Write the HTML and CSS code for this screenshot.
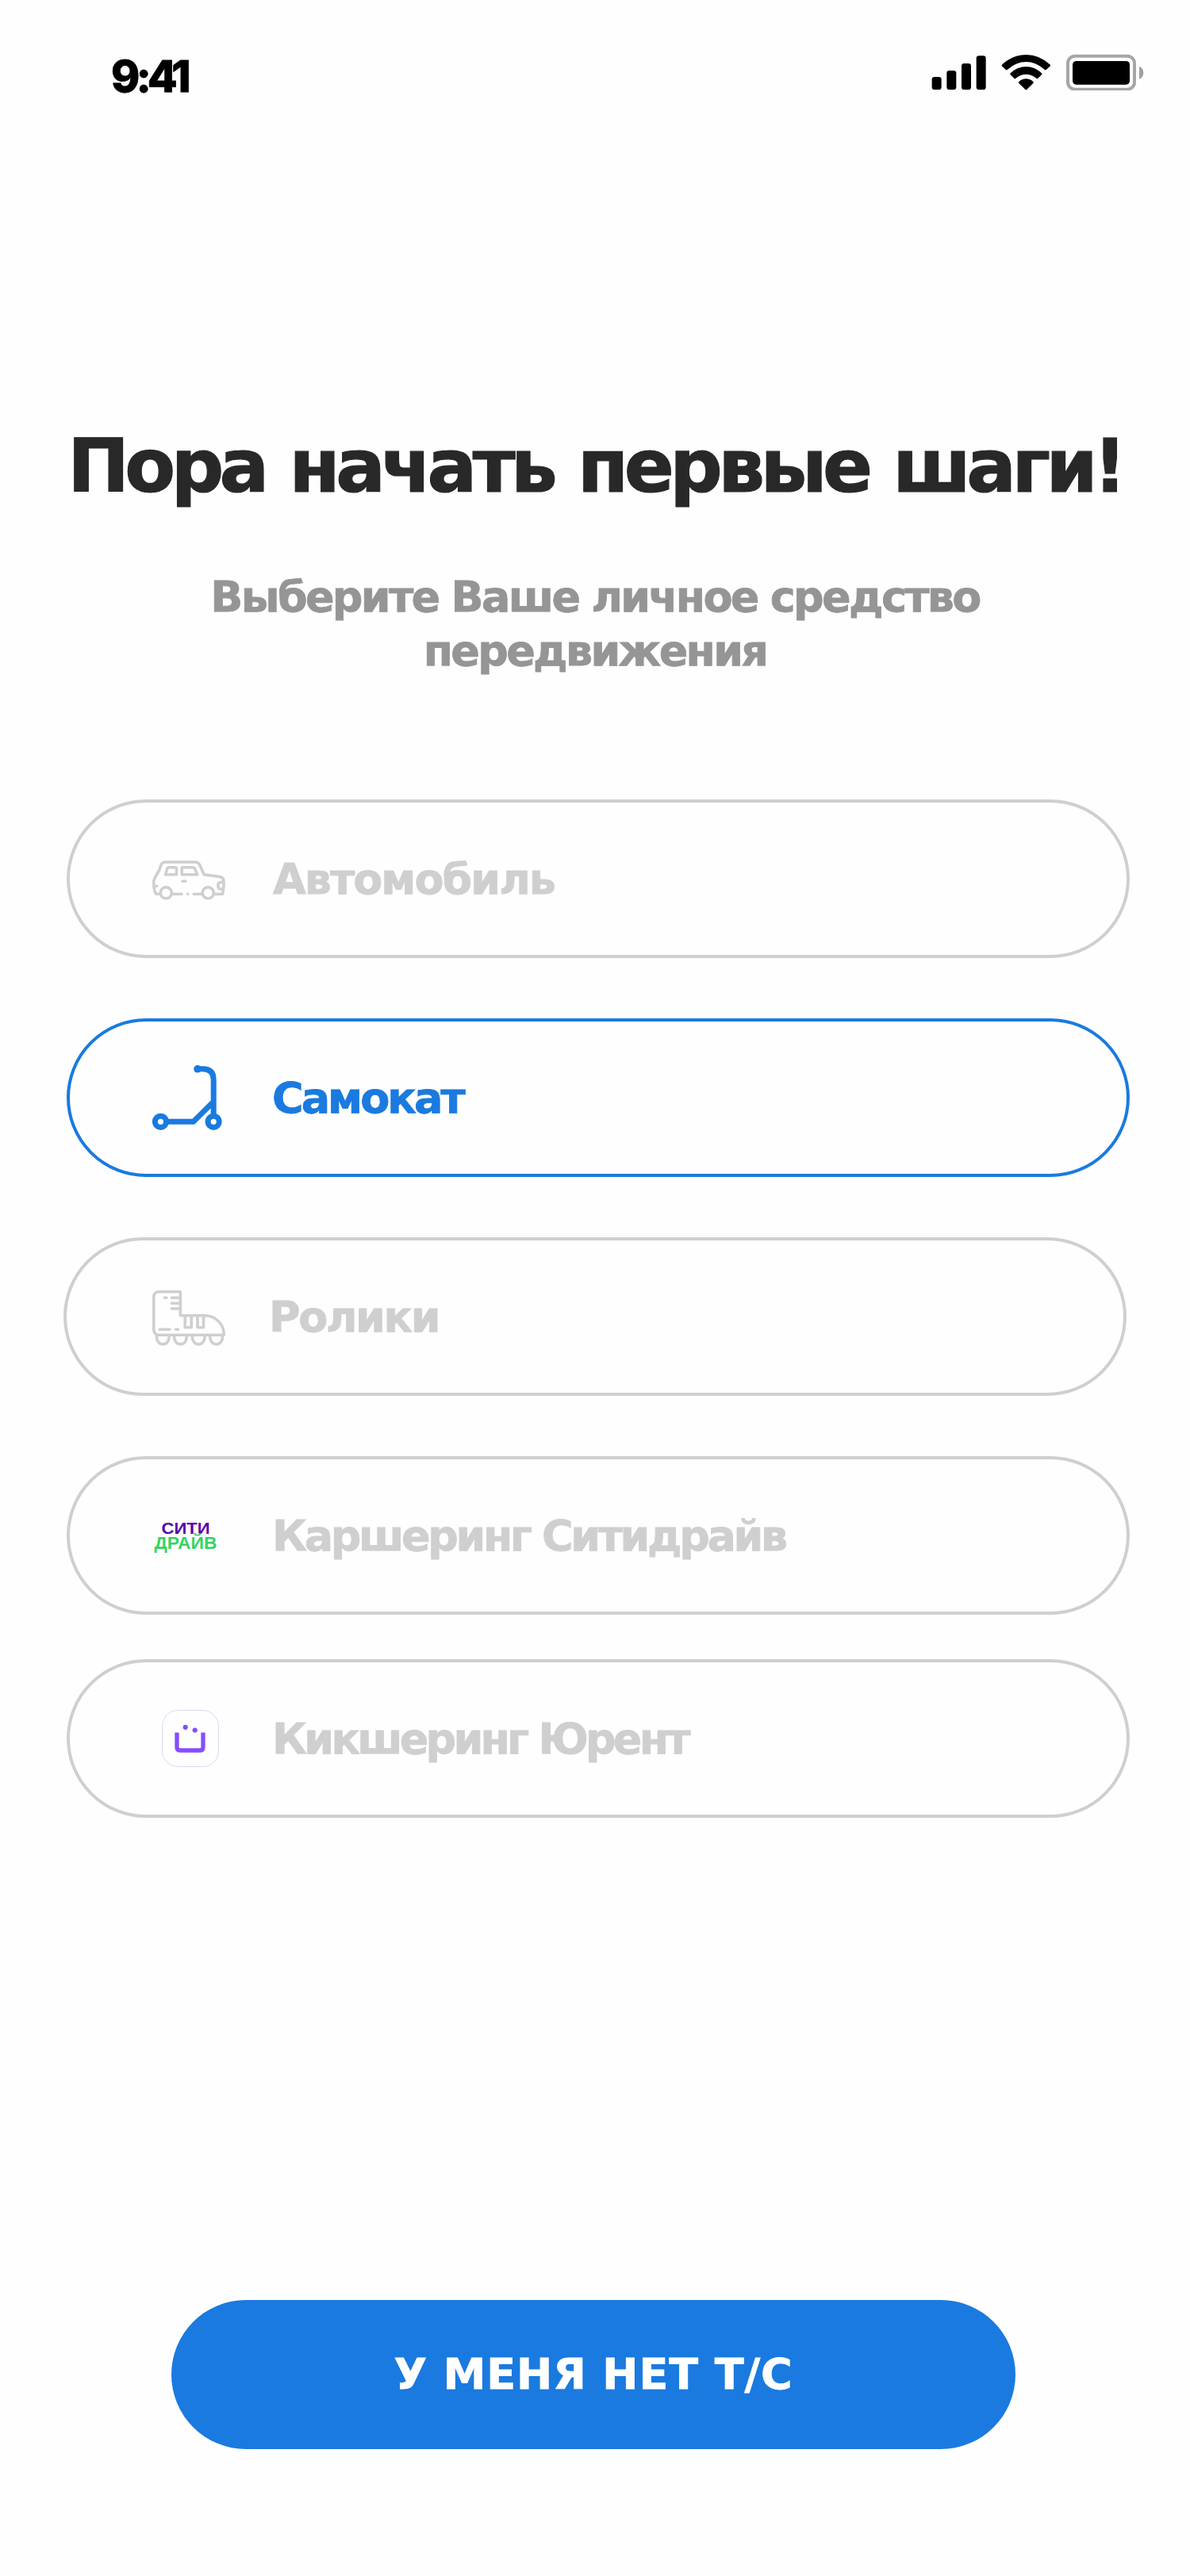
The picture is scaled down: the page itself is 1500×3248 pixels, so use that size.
FILE: index.html
```html
<!DOCTYPE html>
<html lang="ru">
<head>
<meta charset="utf-8">
<title>Выбор транспорта</title>
<link rel="stylesheet" href="styles.css">
</head>
<body>
<main class="screen">
  <header class="status">
    <span class="time">9:41</span>
    <svg class="indicators" width="270" height="50" viewBox="0 0 810 150">
      <rect x="8" y="99" width="36" height="48" rx="10"/>
      <rect x="64" y="75" width="36" height="72" rx="10"/>
      <rect x="120" y="48" width="36" height="99" rx="10"/>
      <rect x="176" y="19" width="36" height="128" rx="10"/>
      <path d="M274 52Q270 55 274 59L288 72Q291 74 294 71Q326 42 364 42Q402 42 434 71Q437 74 440 72L454 59Q458 55 454 52Q414 15 364 15Q314 15 274 52Z"/>
      <path d="M305 85Q302 88 305 91L319 104Q322 107 325 104Q344 89 364 89Q384 89 403 104Q406 107 409 104L423 91Q426 88 423 85Q397 60 364 60Q331 60 305 85Z"/>
      <path d="M337 117Q334 120 337 123L361 146Q364 149 367 146L391 123Q394 120 391 117Q379 106 364 106Q349 106 337 117Z"/>
      <rect x="522" y="20" width="252" height="126" rx="27" fill="none" stroke="#a6a6a6" stroke-width="12"/>
      <rect x="540" y="39" width="216" height="89" rx="14"/>
      <path d="M792 59Q808 67 808 83Q808 100 792 108Z" fill="#a0a0a0"/>
    </svg>
  </header>

  <h1 class="title">Пора начать первые шаги!</h1>
  <p class="subtitle">Выберите Ваше личное средство<br>передвижения</p>

  <section class="options">
    <button class="option">
      <span class="icon lowered">
        <svg width="92" height="50" viewBox="0 0 92 50" class="outline">
          <path d="M10 42.3H6Q4 42.3 3.3 39.5Q1.8 35 1.8 31V27Q1.8 25 2.6 23L9 11.5L11 5.5Q12.3 2 16 2H54.5Q58.5 2 60.5 7L65.2 17.8L84.5 20.4Q90 21.2 90 26.5V32L88.6 42.3H78.5"/>
          <path d="M26 42.3H37M44.6 42.1V42.3M52.2 42.3H62.3M38 26H41.8M2 32.3H5.7"/>
          <circle cx="17.3" cy="40.7" r="7.1"/><circle cx="70.3" cy="40.7" r="7.1"/>
          <path d="M20.8 8.7H29Q30.5 8.7 30.5 10.2V17.7H16.5L18.7 10.3Q19.2 8.7 20.8 8.7ZM38.6 8.7H51Q53 8.7 53.5 10.2L56.8 17.7H37.2V10.2Q37.2 8.7 38.6 8.7ZM90 27.3H87Q82.8 27.3 82.8 31.5Q82.8 36 87 36H89.4"/>
        </svg>
      </span>
      <span class="label car">Автомобиль</span>
    </button>
    <button class="option selected">
      <span class="icon">
        <svg width="88" height="82" viewBox="0 0 88 82" fill="none" stroke="currentColor" stroke-width="7">
          <circle cx="57" cy="4.8" r="4.8" fill="currentColor" stroke="none"/>
          <path d="M57 4.8H63.5Q77.2 4.8 77.2 18.5V63M20 71.3H51.8L77.2 46"/>
          <circle cx="10.5" cy="71.3" r="7.1"/><circle cx="77.2" cy="71.3" r="7.1"/>
        </svg>
      </span>
      <span class="label scooter">Самокат</span>
    </button>
    <button class="option shifted">
      <span class="icon lowered">
        <svg width="92" height="70" viewBox="0 0 92 70" class="outline">
          <path d="M35.4 1.8H8.5Q1.8 1.8 1.8 8.5V49Q1.8 54 6 56.3H90.2V55C90.2 42 79 31.7 66 31.7H35.4Z"/>
          <path d="M24.4 9.3H35M24.4 16.3H35M24.4 23H35M15.5 9.3H17.8M9.3 49.3H22M29.6 49.3H32.5M41.2 32V46.7H49.2V32M57 32V46.7H64.5V32"/>
          <path d="M5.5 57V59A7.8 9 0 0 0 21.2 59V57M27.6 57V59A7.8 9 0 0 0 43.3 59V57M50.4 57V59A7.8 9 0 0 0 66.1 59V57M72.8 57V59A7.8 9 0 0 0 88.5 59V57"/>
        </svg>
      </span>
      <span class="label skates">Ролики</span>
    </button>
    <button class="option">
      <span class="icon">
        <svg width="92" height="50" viewBox="0 0 92 50" class="citydrive">
          <text x="11.5" y="23.3" font-size="19.5" textLength="61" lengthAdjust="spacingAndGlyphs" fill="#5a00a8">СИТИ</text>
          <text x="2.5" y="42.3" font-size="21.5" textLength="79" lengthAdjust="spacingAndGlyphs" fill="#36d563">ДРАЙВ</text>
        </svg>
      </span>
      <span class="label carshare">Каршеринг Ситидрайв</span>
    </button>
    <button class="option near">
      <span class="icon">
        <svg class="urent" width="72" height="72" viewBox="0 0 72 72">
          <rect x=".5" y=".5" width="71" height="71" rx="20" fill="none" stroke="#ddd7f3"/>
          <path d="M19 28.5V47Q19 51 23 51H48Q52 51 52 47V28.5" fill="none" stroke="#844dff" stroke-width="5.3"/>
          <circle cx="29.7" cy="21.8" r="3.1" fill="#844dff"/><circle cx="41.7" cy="25.5" r="3.1" fill="#844dff"/>
        </svg>
      </span>
      <span class="label kickshare">Кикшеринг Юрент</span>
    </button>
  </section>

  <button class="action">У МЕНЯ НЕТ Т/С</button>
</main>
</body>
</html>
```
FILE: styles.css
```css
* { box-sizing: border-box; }
body { margin: 0; background: #fefefe; }
button { font: inherit; background: none; border: 0; padding: 0; }
.screen {
  width: 1500px;
  height: 3248px;
  display: flex;
  flex-direction: column;
  font-family: "DejaVu Sans", Inter, sans-serif;
  font-weight: 700;
  white-space: nowrap;
  -webkit-text-stroke: 0.8px currentColor;
}
.status {
  height: 530px;
  padding: 64px 58px 0 140px;
  display: flex;
  justify-content: space-between;
  align-items: flex-start;
}
.time {
  font-family: Inter, sans-serif;
  font-weight: 800;
  font-size: 55px;
  line-height: 64px;
  letter-spacing: -5px;
  color: #000;
}
.title {
  margin: 0 0 73px;
  text-align: center;
  font-size: 93px;
  line-height: 116px;
  letter-spacing: -5.6px;
  word-spacing: 4px;
  color: #282828;
  -webkit-text-stroke-width: 1.2px;
}
.subtitle {
  margin: 0;
  text-align: center;
  font-size: 54px;
  line-height: 68px;
  letter-spacing: -2.7px;
  color: #959595;
}
.options {
  margin-top: 153px;
  padding-left: 84px;
  display: flex;
  flex-direction: column;
  gap: 76px;
}
.option {
  width: 1340px;
  height: 200px;
  padding-left: 104px;
  display: flex;
  align-items: center;
  border: 4px solid #cfcfcf;
  border-radius: 100px;
  color: #cfcfcf;
}
.selected { border-color: #1a7adf; color: #1a7adf; }
.shifted { margin-left: -4px; padding-left: 108px; }
.near { margin-top: -20px; }
.icon { width: 151px; display: flex; align-items: center; }
.lowered { padding-top: 4px; }
.shifted .icon { width: 147px; }
.label { padding-top: 2px; font-size: 54px; line-height: 68px; letter-spacing: -2px; }
.car { padding-left: 1px; }
.scooter { letter-spacing: -3px; }
.skates { letter-spacing: -2.4px; }
.carshare { letter-spacing: -3.4px; }
.kickshare { letter-spacing: -3.8px; }
.outline { fill: none; stroke: currentColor; stroke-width: 3.6; stroke-linecap: round; stroke-linejoin: round; }
.citydrive { font-family: "Liberation Sans", sans-serif; font-weight: 700; -webkit-text-stroke: 0; }
.urent { margin-left: 12px; }
.action {
  width: 1064px;
  height: 188px;
  margin: 608px 0 0 216px;
  border-radius: 94px;
  background: #1a7adf;
  color: #fff;
  font-size: 54px;
  line-height: 68px;
  letter-spacing: 0.9px;
}
```
